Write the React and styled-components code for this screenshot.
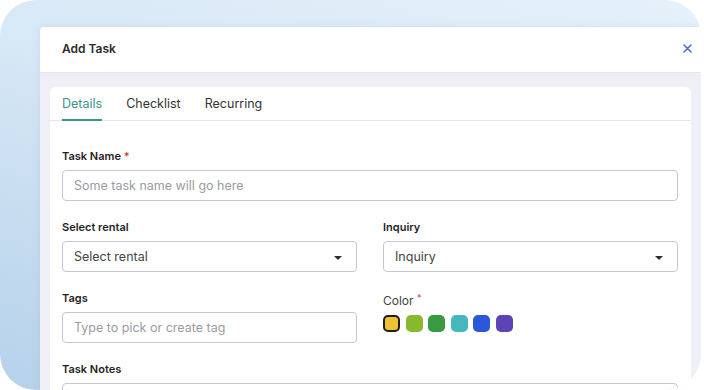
import styled, { createGlobalStyle } from "styled-components";

const GlobalStyle = createGlobalStyle`
  body {
    margin: 0;
    background: #ffffff;
    font-family: Inter, "Open Sans", sans-serif;
  }
  * { box-sizing: border-box; }
`;

const swatches = ["#ecc232", "#88b82c", "#3a9a41", "#44b8bc", "#2c57d9", "#5d43b8"];

export default function App() {
  return (
    <>
      <GlobalStyle />
      <Frame>
        <Modal>
          <Header>
            <Title>Add Task</Title>
            <Close aria-label="close">
              <svg width="9" height="9" viewBox="0 0 9 9">
                <path d="M1 1L8 8M8 1L1 8" stroke="#4a6de0" strokeWidth="1.6" strokeLinecap="round" />
              </svg>
            </Close>
          </Header>
          <Body>
            <Card>
              <Tabs>
                <Tab $active>Details</Tab>
                <Tab>Checklist</Tab>
                <Tab>Recurring</Tab>
              </Tabs>
              <Form>
                <Field $wide>
                  <Label>Task Name <Star>*</Star></Label>
                  <Input placeholder="Some task name will go here" />
                </Field>
                <Field>
                  <Label>Select rental</Label>
                  <Select>
                    <span>Select rental</span>
                    <Caret />
                  </Select>
                </Field>
                <Field>
                  <Label>Inquiry</Label>
                  <Select>
                    <span>Inquiry</span>
                    <Caret />
                  </Select>
                </Field>
                <Field>
                  <Label>Tags</Label>
                  <Input placeholder="Type to pick or create tag" />
                </Field>
                <Field>
                  <Label $light>Color <Star $up>*</Star></Label>
                  <Swatches>
                    {swatches.map((c, i) => (
                      <Swatch key={c} $color={c} $selected={i === 0} />
                    ))}
                  </Swatches>
                </Field>
                <Field $wide>
                  <Label>Task Notes</Label>
                  <Notes />
                </Field>
              </Form>
            </Card>
          </Body>
        </Modal>
      </Frame>
    </>
  );
}

const Frame = styled.div`
  width: 701px;
  height: 390px;
  border-radius: 36px;
  overflow: hidden;
  background: linear-gradient(200deg, #e6f1fa 0%, #d7e8f6 45%, #b5d1ea 100%);
  padding: 27px 0 0 40px;
`;

const Modal = styled.div`
  background: #ffffff;
  border-radius: 4px 0 0 0;
  height: 100%;
  display: flex;
  flex-direction: column;
  box-shadow: 0 0 8px rgba(90, 120, 160, 0.12);
`;

const Header = styled.div`
  height: 46px;
  flex-shrink: 0;
  display: flex;
  align-items: center;
  justify-content: space-between;
  padding: 0 7px 2px 22px;
  border-bottom: 1px solid #e4e4ee;
`;

const Title = styled.h2`
  margin: 0;
  font-size: 12px;
  font-weight: 600;
  color: #2b2b2b;
`;

const Close = styled.span`
  display: flex;
  align-items: center;
  justify-content: center;
  width: 14px;
  height: 14px;
`;

const Body = styled.div`
  flex: 1;
  background: #efeff7;
  padding: 14px 10px 0 10px;
`;

const Card = styled.div`
  background: #ffffff;
  border-radius: 6px 6px 0 0;
  height: 100%;
`;

const Tabs = styled.div`
  display: flex;
  gap: 24px;
  height: 34px;
  padding: 0 12px;
  border-bottom: 1px solid #e6e6ea;
`;

const Tab = styled.div`
  font-size: 12.5px;
  color: ${(p) => (p.$active ? "#3a9686" : "#333333")};
  display: flex;
  align-items: center;
  padding-top: 1px;
  border-bottom: 2px solid ${(p) => (p.$active ? "#3a9686" : "transparent")};
  margin-bottom: -1px;
`;

const Form = styled.div`
  display: grid;
  grid-template-columns: 295px 295px;
  column-gap: 26px;
  row-gap: 19px;
  padding: 28px 13px 0 12px;
`;

const Field = styled.div`
  display: flex;
  flex-direction: column;
  gap: 7px;
  grid-column: ${(p) => (p.$wide ? "1 / -1" : "auto")};
`;

const Label = styled.label`
  font-size: ${(p) => (p.$light ? "12px" : "11px")};
  line-height: 14px;
  font-weight: ${(p) => (p.$light ? 400 : 600)};
  color: ${(p) => (p.$light ? "#444444" : "#1f1f1f")};
`;

const Star = styled.span`
  color: #e03a3a;
  font-size: ${(p) => (p.$up ? "9px" : "11px")};
  vertical-align: ${(p) => (p.$up ? "4px" : "baseline")};
`;

const Input = styled.input`
  height: 31px;
  border: 1px solid #c6c6d2;
  border-radius: 4px;
  padding: 0 11px;
  font-family: inherit;
  font-size: 12.5px;
  color: #333;
  outline: none;

  &::placeholder {
    color: #9b9ba3;
  }
`;

const Select = styled.div`
  height: 31px;
  border: 1px solid #c6c6d2;
  border-radius: 4px;
  padding: 0 14px 0 11px;
  display: flex;
  align-items: center;
  justify-content: space-between;
  font-size: 12.5px;
  color: #444444;
`;

const Caret = styled.span`
  width: 0;
  height: 0;
  margin-top: 3px;
  border-left: 4px solid transparent;
  border-right: 4px solid transparent;
  border-top: 4px solid #2e2e2e;
`;

const Swatches = styled.div`
  display: flex;
  gap: 5.5px;
`;

const Swatch = styled.span`
  width: 17px;
  height: 17px;
  border-radius: 5px;
  background: ${(p) => p.$color};
  border: ${(p) => (p.$selected ? "2px solid #1e1e1e" : "none")};
`;

const Notes = styled.div`
  height: 60px;
  border: 1px solid #c6c6d2;
  border-radius: 4px;
`;
